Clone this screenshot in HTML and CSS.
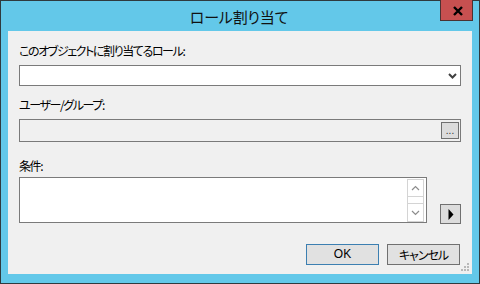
FILE: index.html
```html
<!DOCTYPE html>
<html lang="ja">
<head>
<meta charset="utf-8">
<link rel="stylesheet" href="styles.css">
</head>
<body>
<div class="window">
  <div class="titlebar">
    <span class="title">ロール割り当て</span>
    <div class="close"><svg width="12" height="10" viewBox="0 0 12 10"><path d="M2 1 L10 9 M10 1 L2 9" stroke="#000" stroke-width="2.4"/></svg></div>
  </div>
  <div class="client">
    <div class="label jp l1">このオブジェクトに割り当てるロール:</div>
    <div class="combo">
      <svg class="chev" width="9" height="6" viewBox="0 0 9 6"><path d="M1 1 L4.5 4.5 L8 1" fill="none" stroke="#404040" stroke-width="2"/></svg>
    </div>
    <div class="label jp l2">ユーザー/グループ:</div>
    <div class="field">
      <div class="dots">...</div>
    </div>
    <div class="label jp l3">条件:</div>
    <div class="cond-row">
      <div class="textarea">
        <div class="scroll">
          <div class="sbtn"><svg width="9" height="6" viewBox="0 0 9 6"><path d="M1 5 L4.5 1.5 L8 5" fill="none" stroke="#8c8c8c" stroke-width="1.2"/></svg></div>
          <div class="track"></div>
          <div class="sbtn down"><svg width="9" height="6" viewBox="0 0 9 6"><path d="M1 1 L4.5 4.5 L8 1" fill="none" stroke="#8c8c8c" stroke-width="1.2"/></svg></div>
        </div>
      </div>
      <div class="arrowbtn"><svg width="6" height="11" viewBox="0 0 6 11"><path d="M0.5 0 L5.5 5.5 L0.5 11 Z" fill="#000"/></svg></div>
    </div>
    <div class="buttons">
      <div class="btn ok">OK</div>
      <div class="btn jpb">キャンセル</div>
    </div>
    <svg class="grip" width="9" height="9" viewBox="0 0 9 9">
      <rect x="6" y="0" width="2" height="2" fill="#b8b8b8"/>
      <rect x="3" y="3" width="2" height="2" fill="#b8b8b8"/>
      <rect x="6" y="3" width="2" height="2" fill="#b8b8b8"/>
      <rect x="0" y="6" width="2" height="2" fill="#b8b8b8"/>
      <rect x="3" y="6" width="2" height="2" fill="#b8b8b8"/>
      <rect x="6" y="6" width="2" height="2" fill="#b8b8b8"/>
    </svg>
  </div>
</div>
</body>
</html>
```
FILE: styles.css
```css
html, body {
  margin: 0;
  padding: 0;
  background: #63c8e9;
}
.window {
  width: 480px;
  height: 284px;
  box-sizing: border-box;
  border: 1px solid #2f3a3e;
  background: #63c8e9;
  position: relative;
  font-family: "Noto Sans CJK JP", "Noto Sans", sans-serif;
  color: #000;
}
.titlebar {
  height: 30px;
  display: flex;
  justify-content: center;
  align-items: center;
}
.title {
  font-size: 15px;
  font-feature-settings: "palt";
  letter-spacing: -0.2px;
  color: #111;
  margin-left: -2px;
  margin-top: 1px;
}
.close {
  position: absolute;
  top: -1px;
  right: 6px;
  width: 33px;
  height: 21px;
  box-sizing: border-box;
  background: #c75050;
  border: 1px solid #4a3232;
  border-top: none;
  display: flex;
  align-items: center;
  justify-content: center;
}
.close svg { margin-top: 1px; margin-left: 2px; }
.client {
  margin: 0 7px;
  height: 243px;
  box-sizing: border-box;
  background: #f0f0f0;
  padding: 11px 11px 0;
  position: relative;
  display: flex;
  flex-direction: column;
}
.label {
  height: 18px;
  line-height: 18px;
  font-size: 12px;
  white-space: nowrap;
}
.jp {
  font-feature-settings: "palt";
  letter-spacing: -1.4px;
}
.jpb {
  font-feature-settings: "palt";
  letter-spacing: -1px;
}
.l1 { margin-bottom: 5px; }
.l2 { margin-top: 10px; margin-bottom: 5px; }
.l3 { margin-top: 15px; margin-bottom: 2px; }
.combo {
  height: 21px;
  box-sizing: border-box;
  border: 1px solid #7a7a7a;
  background: #fff;
  position: relative;
}
.chev {
  position: absolute;
  right: 3px;
  top: 7px;
}
.field {
  height: 23px;
  box-sizing: border-box;
  border: 1px solid #7a7a7a;
  background: #f0f0f0;
  display: flex;
  justify-content: flex-end;
  align-items: center;
  padding-right: 1px;
}
.dots {
  width: 18px;
  height: 17px;
  box-sizing: border-box;
  border: 1px solid #707070;
  background: #dcdcdc;
  font-family: "Liberation Sans", sans-serif;
  font-size: 10px;
  line-height: 16px;
  text-align: center;
  color: #333;
  letter-spacing: 0;
}
.cond-row {
  display: flex;
  align-items: flex-end;
  gap: 13px;
}
.textarea {
  width: 408px;
  height: 46px;
  box-sizing: border-box;
  border: 1px solid #7a7a7a;
  background: #fff;
  display: flex;
  justify-content: flex-end;
  padding: 1px 2px 0 0;
}
.scroll {
  width: 17px;
  height: 43px;
  box-sizing: border-box;
  border: 1px solid #d4d4d4;
  display: flex;
  flex-direction: column;
}
.sbtn {
  height: 16px;
  display: flex;
  align-items: center;
  justify-content: center;
  border-bottom: 1px solid #d4d4d4;
}
.sbtn.down {
  border-bottom: none;
  border-top: 1px solid #d4d4d4;
  height: 17px;
}
.track { flex: 1; }
.arrowbtn {
  width: 21px;
  height: 20px;
  box-sizing: border-box;
  border: 1px solid #707070;
  background: #dcdcdc;
  display: flex;
  align-items: center;
  justify-content: center;
  margin-bottom: -1px;
}
.arrowbtn svg { margin-left: 1px; }
.buttons {
  margin-top: 21px;
  display: flex;
  justify-content: flex-end;
  gap: 8px;
  padding-right: 1px;
}
.btn {
  width: 73px;
  height: 21px;
  box-sizing: border-box;
  border: 1px solid #707070;
  background: #e1e1e1;
  font-size: 12px;
  line-height: 19px;
  text-align: center;
}
.btn.ok {
  border-color: #3c7fb1;
  font-family: "Liberation Sans", "Noto Sans", sans-serif;
  font-size: 12px;
}
.grip {
  position: absolute;
  right: 2px;
  bottom: 2px;
}
```
